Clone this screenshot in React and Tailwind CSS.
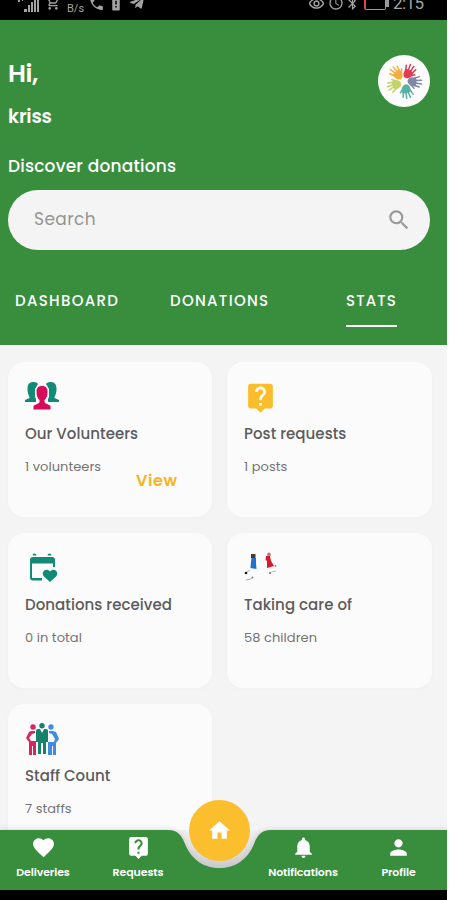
import React from 'react';
import {
  MdSearch, MdLiveHelp, MdFavorite, MdHome, MdNotifications, MdPerson,
  MdPhone, MdBluetooth, MdAccessTime, MdOutlineRemoveRedEye, MdOutlineShoppingCart, MdBatteryAlert,
} from 'react-icons/md';
import { FaTelegramPlane } from 'react-icons/fa';

function StatusBar() {
  return (
    <div className="h-5 shrink-0 bg-black text-[#a3a3a3]">
      <div className="-mt-[6px] flex h-[18px] items-center pl-[18px] pr-[24px]">
        <svg viewBox="0 0 22 18" className="mt-[3px] h-[18px] w-[22px]" fill="currentColor">
          <path d="M0 3h2v3H0zM4 2h1v3H4zM6 13h3v3H6zM10 9h2v7h-2zM13 6h2v10h-2zM16 3h2v13h-2zM19 0h2v16h-2z" />
        </svg>
        <MdOutlineShoppingCart className="ml-[5px] size-[16px]" />
        <span className="ml-[6px] mt-[11px] w-4 font-['Roboto'] text-[11px] leading-none">B/s</span>
        <MdPhone className="ml-[5px] size-[17px]" />
        <MdBatteryAlert className="ml-[2px] size-[18px]" />
        <FaTelegramPlane className="ml-[4px] size-[16px]" />
        <div className="ml-auto flex items-center">
          <MdOutlineRemoveRedEye className="size-[17px]" />
          <MdAccessTime className="ml-[3px] size-[16px]" />
          <MdBluetooth className="ml-[1px] size-[15px]" />
          <div className="ml-[4px] h-[13px] w-[22px] rounded-[2px] border border-[#999] border-l-2 border-l-[#e04444]" />
          <div className="h-[8px] w-[3px] bg-[#999]" />
          <span className="ml-[4px] w-[30px] font-['Roboto'] text-[17px] leading-none tracking-[-0.6px]">2:15</span>
        </div>
      </div>
    </div>
  );
}

function Hand({ color, transform }) {
  return (
    <g transform={transform} fill={color} stroke={color} strokeLinecap="round">
      <path stroke="none" d="M-4.600-10Q0-12 4.600-10L4-5Q2-2 0-2Q-3-2-4-5Z" />
      <path strokeWidth="1.500" fill="none" d="M-3.600-9L-5.400-13.500M-1.200-10L-2-16M1.200-10L1.800-16M3.600-9L5-14M3.500-6L6.500-9" />
    </g>
  );
}

function Avatar() {
  return (
    <div className="flex size-[52px] items-center justify-center rounded-full bg-[#fcfcfc]">
      <svg viewBox="-20 -20 40 40" className="size-[40px]">
        <Hand color="#e23b55" transform="rotate(28) translate(0 -1.500)" />
        <Hand color="#8088a8" transform="rotate(94) translate(0 -1.500)" />
        <Hand color="#59b0a3" transform="rotate(165) translate(0 -1.500)" />
        <Hand color="#c3d36a" transform="rotate(245) translate(0 -1.500)" />
        <Hand color="#f3ae3d" transform="rotate(-43) translate(0 -1.500)" />
      </svg>
    </div>
  );
}

const VolunteersIcon = () => (
  <svg viewBox="0 0 34 30" className="h-[30px] w-[34px]">
    <path fill="#118a76" d="M8 1C4 1 2.500 4 2.500 8c0 4 1 6 2 8v1L0 19v2h11V18l-1-2V8l3-5C12 1.500 10 1 8 1ZM26 1c4 0 5.500 3 5.500 7 0 4-1 6-2 8v1l4.500 2v2H23v-3l1-2V8l-3-5c1-1.500 3-2 5-2Z" />
    <path fill="#d80b5b" stroke="#fbfbfb" strokeWidth="1" d="M17 4.500c-4 0-6 2.500-6 6.500 0 4 1 6 3 8v2.500l-6 3V29h18v-4.500l-6-3V19c2-2 3-4 3-8 0-4-2-6.500-6-6.500Z" />
  </svg>
);

const CalendarHeartIcon = () => (
  <svg viewBox="0 0 34 30" className="h-[30px] w-[34px]">
    <g fill="#118a76">
      <path d="M7.500 3.500a2 2 0 0 1 4 0ZM22.500 3.500a2 2 0 0 1 4 0Z" />
      <path d="M8 5h19q3 0 3 3v7h-2v-3.500H7V26h10v2.500H8q-3 0-3-3V8q0-3 3-3Z" />
      <path d="M25 30l-5.500-5c-5-5 2-10 5.500-5.500 3.500-4.500 10.500.5 5.500 5.500Z" />
    </g>
  </svg>
);

const ChildrenIcon = () => (
  <svg viewBox="0 0 34 30" className="h-[30px] w-[34px]">
    <path d="M7 2h4.500v4H7Z" fill="#473b36" />
    <path fill="#2171d0" d="M7.500 6H12v5l.500 6-6-1 .500-6Z" />
    <path fill="none" stroke="#999" strokeWidth=".8" d="M3 20l3-2M2 28l5-1 2-2" />
    <circle cx="2" cy="21" r="1.300" fill="#171717" />
    <circle cx="8.500" cy="25.500" r=".9" fill="#777" />
    <circle cx="25" cy="2.500" r="2" fill="#b88275" />
    <path fill="#d51b2c" d="M22 4h4l1 5 3 5-7 2V9l-1.500-1Z" />
    <path fill="none" stroke="#d99c9b" strokeWidth=".8" d="M27 20l5-1" />
    <circle cx="26" cy="21" r="1" fill="#a65858" />
    <circle cx="31.500" cy="14" r="1" fill="#c27777" />
  </svg>
);

const StaffIcon = () => (
  <svg viewBox="0 0 34 32" className="h-[32px] w-[34px]">
    <g fill="#d9245c">
      <circle cx="8" cy="4" r="2.700" />
      <path d="M6 8h4v2L7 11l-3 4 2 3h5v14H8V23H7v9H4V19l-3-4 3-6Z" />
    </g>
    <g fill="#438be0">
      <circle cx="26" cy="4" r="2.700" />
      <path d="M24 8h4l3 1 3 7-3 4v12h-3v-9h-1v9h-4V19h6l1-3-3-5-3-1Z" />
    </g>
    <g fill="#16826c">
      <circle cx="17" cy="2.700" r="2.700" />
      <path d="M13 6h2l2 4 2-4h2q2 0 2 2v11h-2v12h-3V20h-2v11h-3V19h-2V8q0-2 2-2Z" />
    </g>
  </svg>
);

const cards = [
  { icon: <VolunteersIcon />, title: 'Our Volunteers', count: '1 volunteers', action: 'View' },
  { icon: <MdLiveHelp className="size-[33px] text-[#fbbd2c]" />, title: 'Post requests', count: '1 posts' },
  { icon: <CalendarHeartIcon />, title: 'Donations received', count: '0 in total' },
  { icon: <ChildrenIcon />, title: 'Taking care of', count: '58 children' },
  { icon: <StaffIcon />, title: 'Staff Count', count: '7 staffs' },
];

function Card({ icon, title, count, action }) {
  return (
    <article className="h-[155px] rounded-[16px] bg-[#fbfbfb] px-[17px] pt-[19px] shadow-[0_1px_5px_rgba(0,0,0,0.025)]">
      <div className="h-[32px]">{icon}</div>
      <h2 className="mt-[11px] whitespace-nowrap text-[15px] font-medium leading-5 tracking-[0.05px] text-[#5c5c5c]">{title}</h2>
      <p className="mt-[14px] whitespace-nowrap text-[13px] leading-[18px] tracking-[0.05px] text-[#737373]">{count}</p>
      {action && <button className="-mt-[5px] ml-[111px] block text-[16px] font-semibold leading-5 tracking-[0.6px] text-[#f6b420]">{action}</button>}
    </article>
  );
}

function NavItem({ Icon, label, className }) {
  return (
    <div className={'flex flex-col items-center pt-[5px] ' + className}>
      <Icon className="size-[25px]" />
      <span className="mt-[5px] whitespace-nowrap text-[11px] font-semibold leading-[14px] tracking-[-0.1px]">{label}</span>
    </div>
  );
}

export default function App() {
  return (
    <div className="h-[900px] w-[450px] overflow-hidden bg-white font-['Poppins','Inter',sans-serif]">
      <div className="flex h-full w-[447px] flex-col bg-[#f4f4f4]">
        <StatusBar />
        <header className="h-[325px] shrink-0 bg-[#388e3c] text-white">
          <div className="flex h-[116px] justify-between pl-[8px] pr-[17px] pt-[35px]">
            <div>
              <h1 className="mt-[3px] text-[25px] font-semibold leading-8 tracking-[-0.5px]">Hi,</h1>
              <p className="mt-[15px] text-[19px] font-semibold leading-6 tracking-[-0.2px]">kriss</p>
            </div>
            <Avatar />
          </div>
          <p className="ml-[8px] mt-[18px] text-[17px] font-medium leading-6 tracking-[0.2px]">Discover donations</p>
          <div className="ml-[8px] mt-[12px] flex h-[60px] w-[422px] items-center justify-between rounded-full bg-[#f4f4f4] pl-[26px] pr-[18px]">
            <span className="-mt-[3px] text-[17px] leading-6 tracking-[0.4px] text-[#949494]">Search</span>
            <MdSearch className="size-[26px] text-[#999]" />
          </div>
          <nav className="flex pl-[15px] pt-[41px] text-[15px] font-medium leading-5">
            <span className="w-[155px] tracking-[1.3px]">DASHBOARD</span>
            <span className="w-[176px] tracking-[1.3px]">DONATIONS</span>
            <span className="h-[36px] w-[51px] border-b-2 border-white tracking-[1.1px]">STATS</span>
          </nav>
        </header>
        <main className="grid h-[485px] shrink-0 auto-rows-[155px] grid-cols-[204px_205px] gap-x-[15px] gap-y-[16px] overflow-hidden pl-[8px] pt-[17px]">
          {cards.map((card) => <Card key={card.title} {...card} />)}
        </main>
        <footer className="relative h-[60px] shrink-0 bg-[#dedede] text-white">
          <svg className="absolute inset-x-0 -top-[12px] h-[72px] w-[447px]" viewBox="0 -12 447 72">
            <defs>
              <linearGradient id="notchShade" x1="0" y1="0" x2="0" y2="1">
                <stop offset="0" stopColor="#f0f0f0" />
                <stop offset="1" stopColor="#cccccc" />
              </linearGradient>
              <filter id="navShadow" x="-5%" y="-30%" width="110%" height="160%">
                <feGaussianBlur stdDeviation="2.500" />
              </filter>
            </defs>
            <path fill="url(#notchShade)" d="M165 0H275V40H165Z" />
            <path fill="#bdbdbd" opacity=".5" filter="url(#navShadow)" d="M0-1H168C179-1 183 6 187 15C194 30 205 36 219.500 36C234 36 245 30 252 15C256 6 260-1 271-1H447V60H0Z" />
            <path fill="#388e3c" d="M0 0H168C178 0 182 6 185 14C192 31 205 38 219.500 38C234 38 247 31 254 14C257 6 261 0 271 0H447V60H0Z" />
          </svg>
          <div className="relative flex h-full">
            <NavItem Icon={MdFavorite} label="Deliveries" className="w-[86px]" />
            <NavItem Icon={MdLiveHelp} label="Requests" className="w-[104px]" />
            <div className="-mt-[30px] ml-[-1px] flex size-[61px] shrink-0 items-center justify-center rounded-full bg-[#fbbf2d]">
              <MdHome className="size-[25px]" />
            </div>
            <NavItem Icon={MdNotifications} label="Notifications" className="w-[106px]" />
            <NavItem Icon={MdPerson} label="Profile" className="w-[85px]" />
          </div>
        </footer>
        <div className="h-[10px] shrink-0 bg-black" />
      </div>
    </div>
  );
}
